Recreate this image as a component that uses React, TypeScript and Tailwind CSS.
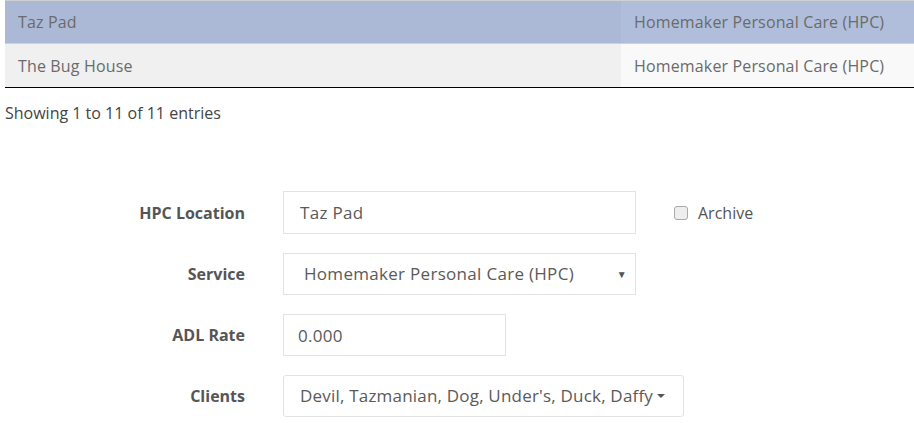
import React from 'react';

const rows = [
  { name: 'Taz Pad', service: 'Homemaker Personal Care (HPC)', selected: true },
  { name: 'The Bug House', service: 'Homemaker Personal Care (HPC)', selected: false },
];

function Label({ children }: { children: React.ReactNode }) {
  return (
    <div className="w-[245px] shrink-0 text-right text-[16px] font-bold text-[#555]">{children}</div>
  );
}

export default function App() {
  return (
    <div className="min-h-screen bg-white font-['Open_Sans',sans-serif] text-[#555]">
      <div className="pl-[5px]">
        <table className="w-full border-collapse border-t border-t-[#d0d0d0] border-b border-b-black text-[16px] tracking-[0.15px] text-[#6b6b6b]">
          <tbody>
            {rows.map((r) => (
              <tr
                key={r.name}
                className={r.selected ? 'h-[43px] border-b border-b-[#c9d1e3] bg-[#abb9d6]' : 'h-[44px] bg-[#f0f0f0]'}
              >
                <td className="px-[13px] py-0">{r.name}</td>
                <td className={`w-[293px] px-[13px] py-0 ${r.selected ? 'bg-[#b0bedb]' : 'bg-[#f9f9f9]'}`}>
                  {r.service}
                </td>
              </tr>
            ))}
          </tbody>
        </table>
        <div className="mt-[13px] text-[16px] text-[#444]">Showing 1 to 11 of 11 entries</div>
      </div>

      <div className="mt-[66px] flex flex-col gap-[19px]">
        <div className="flex items-center">
          <Label>HPC Location</Label>
          <input
            defaultValue="Taz Pad"
            className="ml-[38px] h-[43px] w-[353px] border border-[#e3e3e3] px-[16px] text-[17px] tracking-[0.3px] text-[#5a5a5a] outline-none"
          />
          <label className="ml-[38px] flex items-center gap-[10px] text-[16px] text-[#555]">
            <span className="h-[14px] w-[14px] rounded-[3px] border border-[#aaa] bg-[#eee]" />
            Archive
          </label>
        </div>
        <div className="flex items-center">
          <Label>Service</Label>
          <div className="ml-[38px] flex h-[42px] w-[353px] items-center justify-between border border-[#e3e3e3] pl-[20px] pr-[8px] text-[17px] tracking-[0.3px] text-[#5a5a5a]">
            <span>Homemaker Personal Care (HPC)</span>
            <span className="text-[10px] text-[#555]">▼</span>
          </div>
        </div>
        <div className="flex items-center">
          <Label>ADL Rate</Label>
          <input
            defaultValue="0.000"
            className="ml-[38px] h-[42px] w-[223px] border border-[#e3e3e3] px-[14px] text-[17px] tracking-[0.3px] text-[#5a5a5a] outline-none"
          />
        </div>
        <div className="flex items-center">
          <Label>Clients</Label>
          <div className="ml-[38px] flex h-[42px] w-[401px] items-center rounded-[3px] border border-[#e3e3e3] pl-[16px] pr-[14px] text-[17px] tracking-[0.2px] text-[#5a5a5a]">
            <span>Devil, Tazmanian, Dog, Under's, Duck, Daffy</span>
            <span className="ml-[4px] h-0 w-0 border-x-[4px] border-t-[4px] border-x-transparent border-t-[#555]" />
          </div>
        </div>
      </div>
    </div>
  );
}
